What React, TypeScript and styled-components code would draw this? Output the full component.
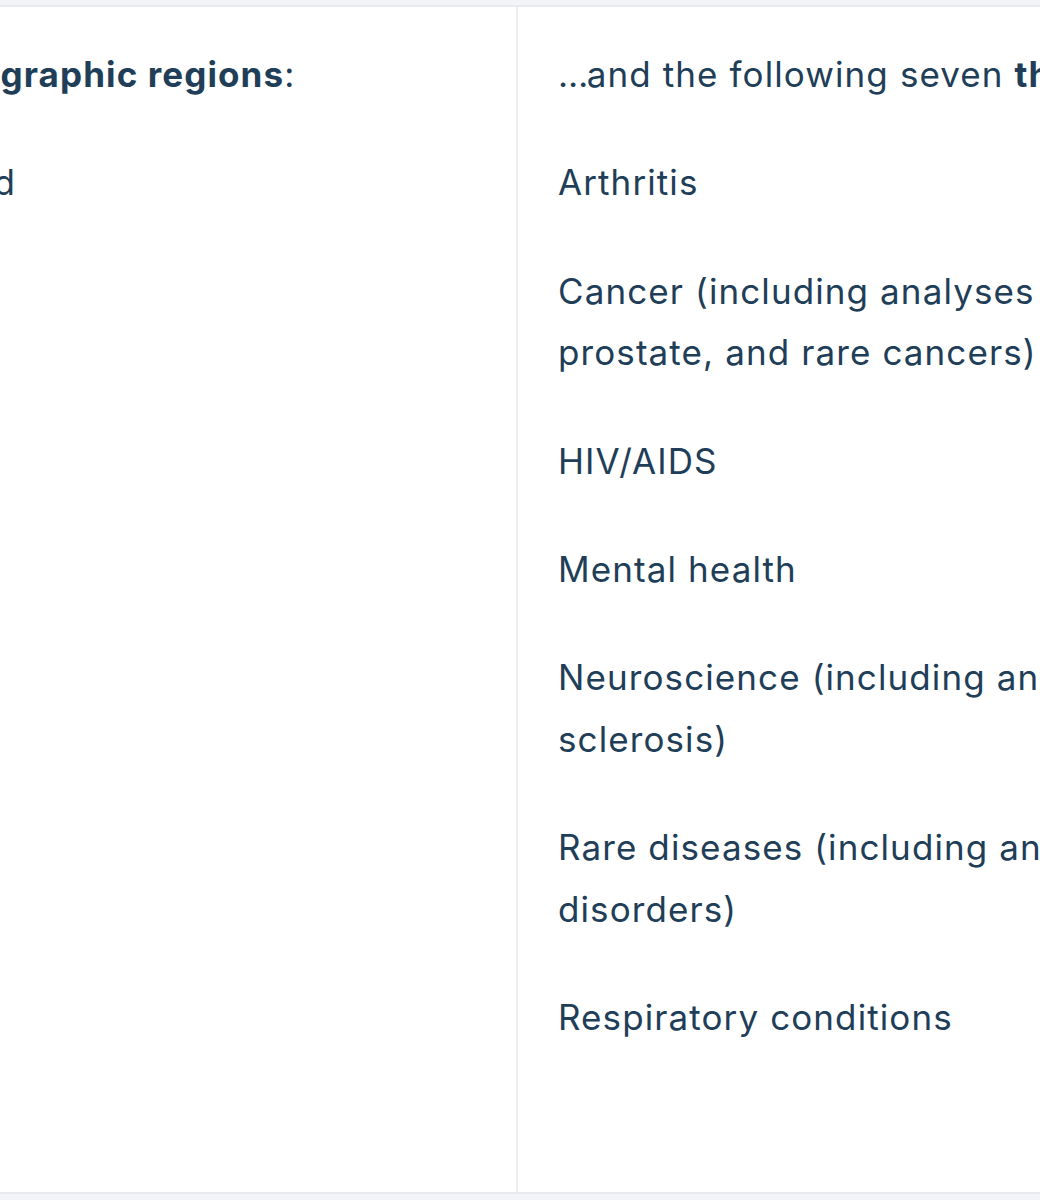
import React from "react";
import styled, { createGlobalStyle } from "styled-components";

const GlobalStyle = createGlobalStyle`
  html, body {
    margin: 0;
    padding: 0;
    background: #f3f4f8;
  }
  body {
    font-family: Inter, "Noto Sans", "Liberation Sans", sans-serif;
    color: #213e58;
  }
`;

const Viewport = styled.div`
  width: 1040px;
  height: 1200px;
  overflow: hidden;
  padding-top: 5px;
  box-sizing: border-box;
`;

const Table = styled.div`
  display: grid;
  grid-template-columns: 886px 1140px;
  margin-left: -370px;
  width: 2026px;
  background: #ffffff;
  border-top: 2px solid #e9eaef;
  border-bottom: 2px solid #e9eaef;
`;

const Cell = styled.div<{ $divider?: boolean }>`
  padding: 37px 40px 144px;
  border-left: ${(p) => (p.$divider ? "2px solid #eceef1" : "none")};
  box-sizing: border-box;
`;

const Heading = styled.p`
  margin: 0;
  font-size: 35px;
  letter-spacing: 1.1px;
  line-height: 61.4px;
  font-weight: 400;
  white-space: nowrap;

  strong {
    font-weight: 700;
  }
`;

const Ellipsis = styled.span`
  letter-spacing: -1.5px;
`;

const Item = styled.p`
  margin: 47px 0 0;
  font-size: 35px;
  letter-spacing: 1.1px;
  line-height: 61.4px;
  font-weight: 400;
`;

const leftItems = ["Wales and Scotland", "England", "Ireland", "Europe", "Asia"];

const rightItems = [
  "Arthritis",
  "Cancer (including analyses for breast, lung, bowel, prostate, and rare cancers)",
  "HIV/AIDS",
  "Mental health",
  "Neuroscience (including analyses of dementia and multiple sclerosis)",
  "Rare diseases (including analyses for inherited metabolic disorders)",
  "Respiratory conditions",
];

export default function App() {
  return (
    <>
      <GlobalStyle />
      <Viewport>
        <Table>
          <Cell>
            <Heading>
              Data from <strong>five geographic regions</strong>:
            </Heading>
            {leftItems.map((t) => (
              <Item key={t}>{t}</Item>
            ))}
          </Cell>
          <Cell $divider>
            <Heading>
              <Ellipsis>…</Ellipsis>and the following seven <strong>therapeutic areas</strong>:
            </Heading>
            {rightItems.map((t) => (
              <Item key={t}>{t}</Item>
            ))}
          </Cell>
        </Table>
      </Viewport>
    </>
  );
}
